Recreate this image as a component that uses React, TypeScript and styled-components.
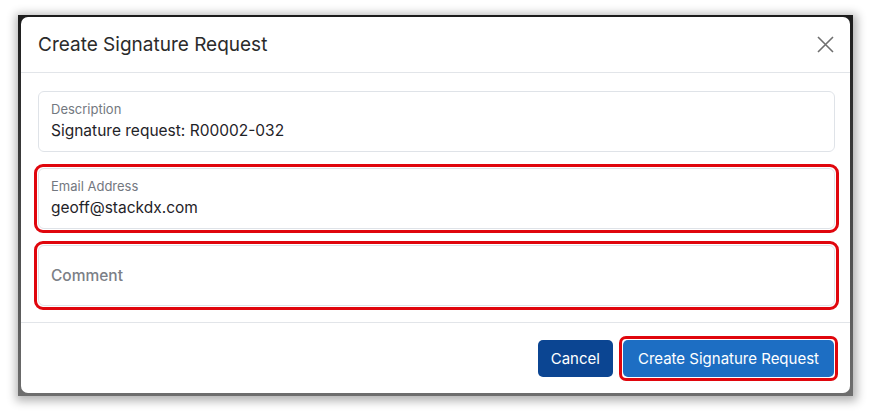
import React from "react";
import styled, { createGlobalStyle } from "styled-components";

const GlobalStyle = createGlobalStyle`
  html, body {
    margin: 0;
    padding: 0;
    background: #ffffff;
    font-family: Inter, "Noto Sans", "Liberation Sans", sans-serif;
  }
`;

const Page = styled.div`
  width: 873px;
  height: 411px;
  padding: 15px 0 0 18px;
  box-sizing: border-box;
`;

const Backdrop = styled.div`
  width: 835px;
  padding: 2px 3px 3px 3px;
  box-sizing: border-box;
  background: linear-gradient(#1c1c1c, #6e6e6e);
  box-shadow: 1px 2px 9px 3px rgba(0, 0, 0, 0.3);
`;

const Modal = styled.div`
  background: #fff;
  border-radius: 7px;
  height: 376px;
  display: flex;
  flex-direction: column;
  overflow: hidden;
`;

const Header = styled.div`
  height: 56px;
  flex-shrink: 0;
  display: flex;
  align-items: center;
  justify-content: space-between;
  padding: 0 14px 0 17px;
  border-bottom: 1px solid #e2e5e9;
  box-sizing: border-box;
`;

const Title = styled.h2`
  margin: 0;
  font-size: 19px;
  font-weight: 400;
  color: #2b2b2b;
`;

const CloseButton = styled.button`
  border: 0;
  background: none;
  padding: 0;
  width: 22px;
  height: 22px;
  display: flex;
  align-items: center;
  justify-content: center;
  cursor: pointer;
`;

const Body = styled.div`
  padding: 14px 11px 12px 13px;
  display: flex;
  flex-direction: column;
  gap: 8px;
  border-bottom: 1px solid #e2e5e9;
`;

const Highlight = styled.div<{ $on?: boolean }>`
  border: 3px solid ${(p) => (p.$on ? "#e0060d" : "transparent")};
  border-radius: 9px;
  padding: 1px;
`;

const Field = styled.div<{ $empty?: boolean }>`
  height: 61px;
  box-sizing: border-box;
  border: 1px solid #dfe3e8;
  border-radius: 6px;
  padding: ${(p) => (p.$empty ? "0 12px" : "9px 12px 0")};
  display: flex;
  flex-direction: column;
  justify-content: ${(p) => (p.$empty ? "center" : "flex-start")};
  gap: 2px;
`;

const Label = styled.div`
  font-size: 13px;
  line-height: 17px;
  color: #737880;
`;

const Value = styled.div`
  font-size: 15.5px;
  line-height: 22px;
  color: #1f2328;
`;

const Placeholder = styled.div`
  font-size: 15.5px;
  font-weight: 500;
  color: #7c8087;
`;

const Footer = styled.div`
  flex: 1;
  display: flex;
  align-items: center;
  justify-content: flex-end;
  gap: 6px;
  padding: 1px 12px 0 0;
`;

const Button = styled.button<{ $variant: "dark" | "primary" }>`
  height: 37px;
  border: 0;
  border-radius: 5px;
  padding: 0 ${(p) => (p.$variant === "dark" ? "13px" : "15px")};
  font-family: inherit;
  font-size: 15px;
  color: #fff;
  background: ${(p) => (p.$variant === "dark" ? "#0b4592" : "#1d6ec3")};
  cursor: pointer;
`;

const ButtonRing = styled.div`
  border: 3px solid #e0060d;
  border-radius: 7px;
  padding: 1px;
  display: flex;
`;

const CloseIcon = () => (
  <svg width="17" height="17" viewBox="0 0 17 17" fill="none">
    <path d="M1 1L16 16M16 1L1 16" stroke="#6f6f6f" strokeWidth="1.6" />
  </svg>
);

export default function App() {
  return (
    <>
      <GlobalStyle />
      <Page>
        <Backdrop>
          <Modal>
            <Header>
              <Title>Create Signature Request</Title>
              <CloseButton aria-label="Close">
                <CloseIcon />
              </CloseButton>
            </Header>
            <Body>
              <Highlight>
                <Field>
                  <Label>Description</Label>
                  <Value>Signature request: R00002-032</Value>
                </Field>
              </Highlight>
              <Highlight $on>
                <Field>
                  <Label>Email Address</Label>
                  <Value>geoff@stackdx.com</Value>
                </Field>
              </Highlight>
              <Highlight $on>
                <Field $empty>
                  <Placeholder>Comment</Placeholder>
                </Field>
              </Highlight>
            </Body>
            <Footer>
              <Button $variant="dark">Cancel</Button>
              <ButtonRing>
                <Button $variant="primary">Create Signature Request</Button>
              </ButtonRing>
            </Footer>
          </Modal>
        </Backdrop>
      </Page>
    </>
  );
}
